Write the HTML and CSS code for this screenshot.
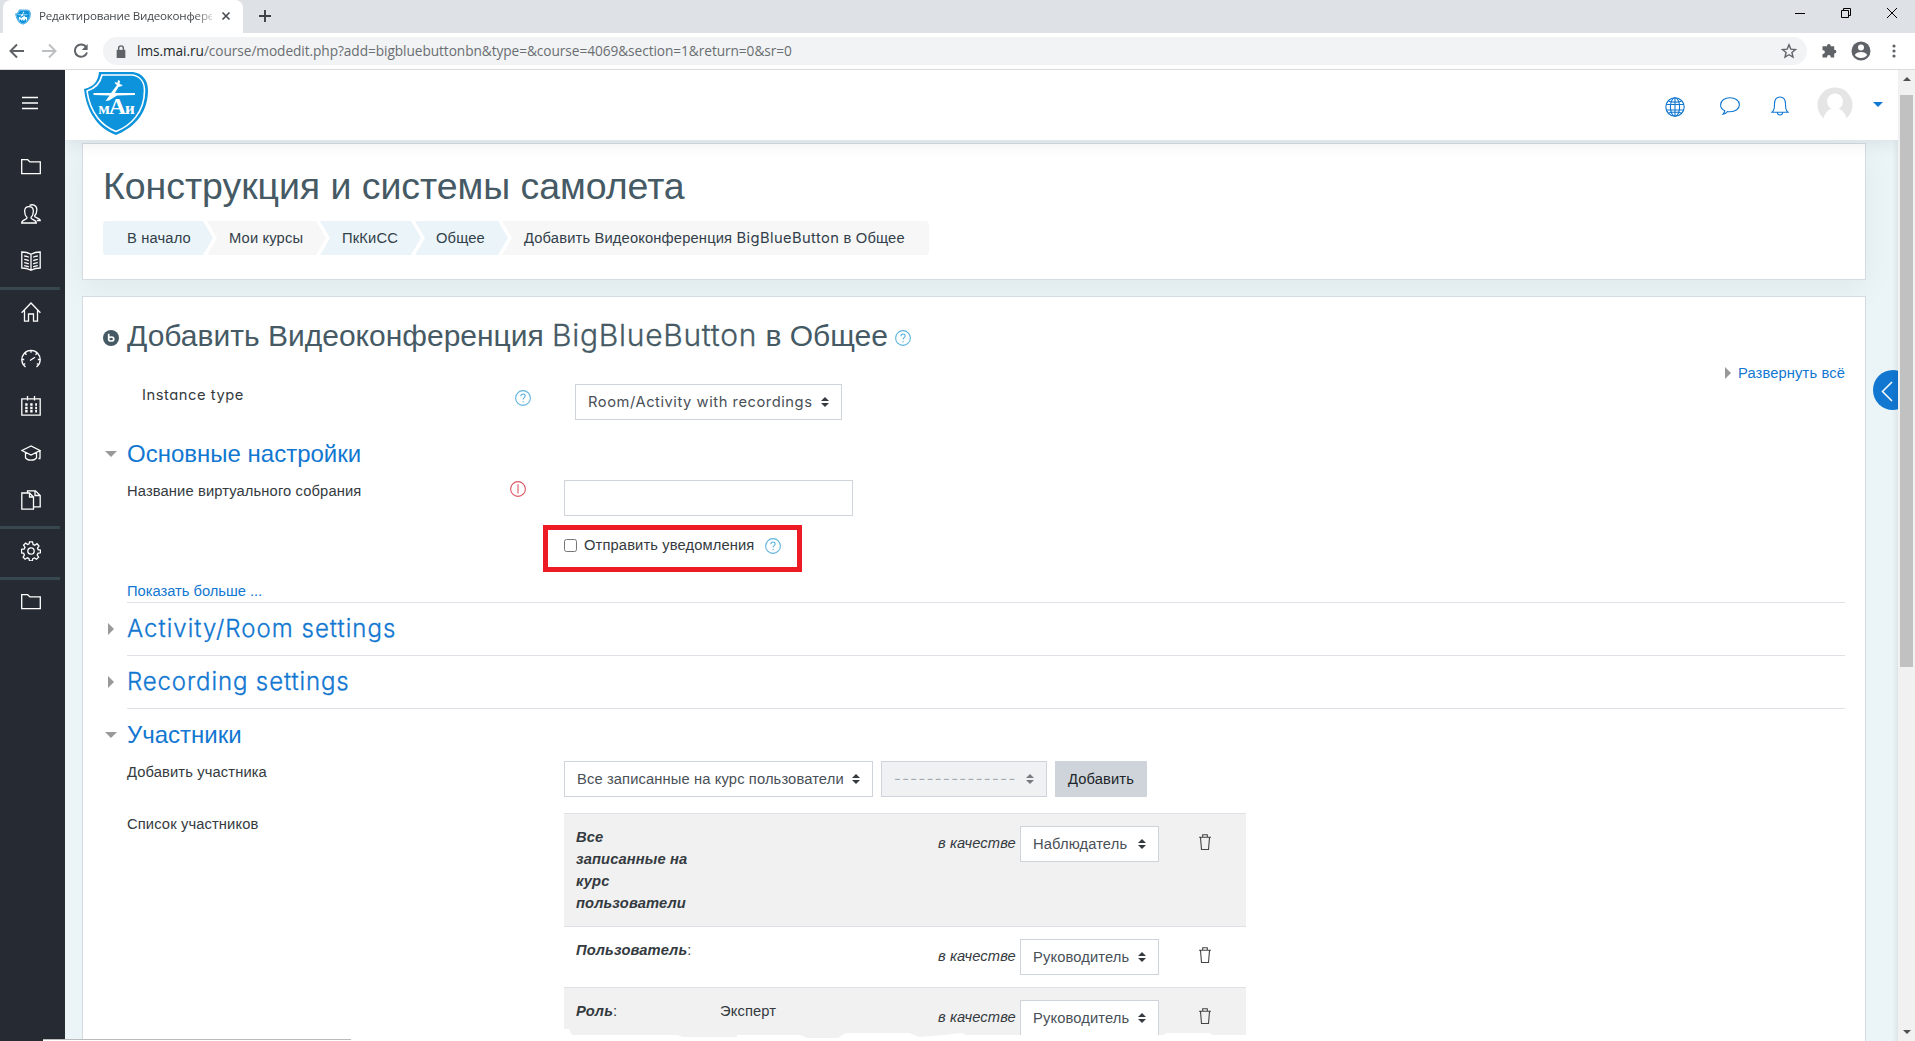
FILE: index.html
```html
<!DOCTYPE html>
<html lang="ru">
<head>
<meta charset="utf-8">
<title>Редактирование Видеоконференция</title>
<link rel="stylesheet" href="styles.css">
</head>
<body>
<svg class="defs" width="0" height="0">
  <symbol id="folder" viewBox="0 0 20 20"><path d="M.7 16.700V2.700h6l2.200 2.200h10.400v11.800z"/></symbol>
  <symbol id="help" viewBox="0 0 16 16"><circle cx="8" cy="8" r="7.400"/><path d="M5.900 6.200C5.900 3.300 10.200 3.400 10.200 6c0 1.700-2.100 1.600-2.100 3.400M8.100 11.100v1.200"/></symbol>
  <symbol id="trash" viewBox="0 0 14 18"><path d="M1 4.300h12M4.700 4V1.800h4.600V4M2.500 4.500l1 12h7l1-12"/></symbol>
  <symbol id="shield" viewBox="0 0 66 64">
    <path fill="#0d93dc" d="M16 1h34c9 1 15 8 15 18 0 26-17 39-32 45C17 58 4 44 1 18c8-2 14-6 15-17z"/>
    <path fill="none" stroke="#fff" stroke-width="1.600" d="M19 4h30c8 1 12.500 7 12.500 15.500C61.500 42 47 55 33 60.500 19 55 7 42 4 20c8-2.500 13-7 15-16z"/>
    <path fill="#fff" d="M35 9l2 1-.5 3 3 1-.5 1-3.500 1-3.500 6H52v2l-18 .5-8 5-3.500.5 4-5.500-16-.5v-2H28l6-8-2.500-2 .5-.8 2.500.6z"/>
  </symbol>
</svg>

<div class="tabstrip">
  <div class="tab">
    <svg class="favicon" viewBox="0 0 66 64"><use href="#shield"/><path fill="#fff" d="M16 46V32h5l4 6 4-6h4l5-6 4 6h8v14h-5V37l-6 9h-5l-2-5-3 5h-4v-8l-3 6-3-6v8z"/></svg>
    <span class="tab-title">Редактирование Видеоконфере</span>
    <svg class="tab-close" viewBox="0 0 10 10"><path d="M1.500 1.500l7 7m0-7l-7 7"/></svg>
  </div>
  <svg class="new-tab" viewBox="0 0 12 12"><path d="M6 0v12M0 6h12"/></svg>
  <div class="window-buttons">
    <svg viewBox="0 0 12 12"><path d="M1 6.500h10"/></svg>
    <svg viewBox="0 0 12 12"><path d="M1.500 3.500h7v7h-7zM3.500 3V1.500h7v7H9"/></svg>
    <svg viewBox="0 0 12 12"><path d="M1 1l10 10m0-10L1 11"/></svg>
  </div>
</div>

<div class="toolbar">
  <svg class="nav-icon" viewBox="0 0 16 16"><path d="M15 8H2M8 1.500L1.500 8 8 14.500"/></svg>
  <svg class="nav-icon off" viewBox="0 0 16 16"><path d="M1 8h13M8 1.500L14.500 8 8 14.500"/></svg>
  <svg class="nav-icon" viewBox="0 0 16 16"><path d="M13.400 4.400A6.200 6.200 0 1 0 14 9.500"/><path class="solid" d="M14.600 1v6H8.800z"/></svg>
  <div class="omnibox">
    <svg class="lock" viewBox="0 0 9 12"><path class="solid" d="M.5 4.500h8V12h-8z"/><path d="M2.300 5V3a2.200 2.200 0 0 1 4.400 0v2"/></svg>
    <span class="url"><b>lms.mai.ru</b>/course/modedit.php?add=bigbluebuttonbn&amp;type=&amp;course=4069&amp;section=1&amp;return=0&amp;sr=0</span>
    <svg class="star" viewBox="0 0 16 16"><path d="M8 1.800l1.800 4.300 4.700.4-3.600 3 1.100 4.600L8 11.700l-4 2.400 1.100-4.600-3.600-3 4.700-.4z"/></svg>
  </div>
  <svg class="puzzle" viewBox="0 0 16 16"><path d="M6 3a1.900 1.900 0 0 1 3.800 0v.2h3.400v3.500h.3a1.900 1.900 0 0 1 0 3.800h-.3v4H9.700v-.6a1.800 1.800 0 0 0-3.600 0v.6H1.500v-3.600h.6a1.800 1.800 0 0 0 0-3.600h-.6V3.200H6z"/></svg>
  <svg class="profile" viewBox="0 0 20 20"><circle cx="10" cy="10" r="9.500" fill="#5f6368"/><circle cx="10" cy="6.500" r="3" fill="#fff"/><path fill="#fff" d="M3.800 14c1.500-4 11-4 12.400 0-2.500 4-9.800 4-12.400 0z"/></svg>
  <svg class="dots" viewBox="0 0 4 14"><circle cx="2" cy="2" r="1.600"/><circle cx="2" cy="7" r="1.600"/><circle cx="2" cy="12" r="1.600"/></svg>
</div>

<div class="viewport">
  <nav class="sidebar">
    <a class="burger"><svg viewBox="0 0 16 14"><path d="M0 1.500h16M0 7h16M0 12.500h16"/></svg></a>
    <a><svg><use href="#folder"/></svg></a>
    <a><svg viewBox="0 0 20 20"><path d="M.7 19c0-4 6-2.800 5.300-5.500C3.500 11 3.500 9 3.700 6.500 4 3.600 6 2.700 8 2.700s4 .9 4.300 3.800c.2 2.500.2 4.500-2.300 7-.7 2.700 5.300 1.500 5.300 5.500zM8.500 1.500c2.500-1.500 7-.7 7.300 3.500.2 2.500.2 4.500-2.300 7-.3 2.200 5.500 1.500 5.700 4.500h-3.400"/></svg></a>
    <a><svg viewBox="0 0 20 20"><path d="M10 3.200C7 1.500 4 1 .8 1v16c3.200 0 6.200.7 9.200 2.300 3-1.600 6-2.300 9.200-2.300V1C16 1 13 1.500 10 3.200v16M3.200 5c1.700.1 3.200.5 4.600 1.300M3.200 8.300c1.700.1 3.200.5 4.600 1.300M3.200 11.600c1.700.1 3.200.5 4.600 1.300M3.200 14.600c1.700.1 3.200.5 4.600 1.300M16.800 5c-1.700.1-3.200.5-4.600 1.300M16.800 8.300c-1.700.1-3.200.5-4.600 1.300M16.800 11.600c-1.700.1-3.200.5-4.600 1.300M16.800 14.600c-1.700.1-3.200.5-4.600 1.300"/></svg></a>
    <hr>
    <a><svg viewBox="0 0 20 20"><path d="M.6 10.800L10 1l9.400 9.800M3.500 8.500v10.700h4V12h5v7.200h4V8.500"/></svg></a>
    <a><svg viewBox="0 0 20 20"><path d="M4.500 18A9.200 9.200 0 1 1 15.500 18M9 11.500l5-3.200M10 1.500v2.200M4 4.200l1.500 1.500M16 4.200l-1.500 1.500M1 10.500h2.200M16.800 10.500H19M2.600 15.500l1.600-.8M17.400 15.500l-1.600-.8"/></svg></a>
    <a><svg viewBox="0 0 20 20"><path d="M.8 2.800h18.400v16.400H.8zM6.500 0v4.500M13.500 0v4.500"/><path stroke-width="2.400" stroke-dasharray="2.400 2.600" d="M4.200 8.500h11.800M4.200 12h11.800M4.200 15.200h11.800"/></svg></a>
    <a><svg viewBox="0 0 20 20"><path d="M10 3L1 7.500 10 12l9-4.500zM4.500 9.500v5.300c2 3 9 3 11 0V9.500M19 7.500V15M17.500 15.500h2"/></svg></a>
    <a><svg viewBox="0 0 20 20"><path d="M.8 3h7.700l4 4v12.200H.8zM8.500 3v4h4M6.500 2.800v-2h8l4.700 4.700v11.300h-6.500M14 1v4.500h5"/></svg></a>
    <hr>
    <a><svg viewBox="0 0 20 20"><circle cx="10" cy="10" r="3.200"/><path d="M8.500.8h3l.6 2.700 1.600.7L16 2.700 18 5l-1.500 2 .6 1.600 2.300.5v2.700l-2.500.6-.7 1.600 1.400 2.200-2.100 2-2-1.300-1.700.7-.5 2.400H8.500l-.6-2.500-1.600-.7-2.200 1.400-2-2.100 1.300-2-.7-1.700-2.200-.5V8.400L3.300 8 4 6.300 2.600 4l2-1.900 2.100 1.400 1.400-.6z"/></svg></a>
    <hr>
    <a><svg><use href="#folder"/></svg></a>
  </nav>

  <main class="page">
    <header class="topbar">
      <div class="logo">
        <svg><use href="#shield"/></svg>
        <span class="logo-text">м<i>А</i>и</span>
      </div>
      <svg class="globe" viewBox="0 0 20 20"><circle cx="10" cy="10" r="9.200"/><ellipse cx="10" cy="10" rx="4.600" ry="9.200"/><path d="M10 .8v18.400M1 7.500h18M1 13h18M3.500 4.200c4 1.200 9 1.200 13 0M3.500 16c4-1.200 9-1.200 13 0"/></svg>
      <svg class="chat" viewBox="0 0 20 18"><path d="M4.800 13.700C2 12.500.6 10.500.6 8 .6 3.800 4.500.7 10 .7s9.400 3 9.400 7-3.900 7-9.400 7c-1 0-1.700 0-2.500-.2-1 1.400-2.300 2.300-4.500 2.800 1-1.200 1.600-2.200 1.800-3.600z"/></svg>
      <svg class="bell" viewBox="0 0 18 20"><path d="M1 16.200c2.800-2 2.300-5 2.500-8.500C3.700 3.300 6 1 9 1s5.300 2.300 5.500 6.700c.2 3.500-.3 6.500 2.500 8.500zM6.300 16.500c.3 3.400 5.100 3.400 5.400 0"/></svg>
      <svg class="avatar" viewBox="0 0 36 36"><circle cx="18" cy="18" r="17.500" fill="#e5e5e5"/><circle cx="18" cy="14.500" r="8" fill="#fff"/><path fill="#fff" d="M6 36c0-9 5-13.500 9-14.500h6c4 1 9 5.500 9 14.500z"/></svg>
      <span class="caret"></span>
    </header>

    <section class="card course">
      <h1>Конструкция и системы самолета</h1>
      <ol class="crumbs">
        <li class="c1">В начало</li>
        <li class="c2">Мои курсы</li>
        <li class="c3">ПкКиСС</li>
        <li class="c4">Общее</li>
        <li class="c5">Добавить Видеоконференция <span class="lat">BigBlueButton</span> в Общее</li>
      </ol>
    </section>

    <section class="card form">
      <h2>
        <svg class="bbb" viewBox="0 0 16 16"><circle cx="8" cy="8" r="8" fill="#455a64"/><path d="M5.700 3.800v5.700c0 2 5 2 5 0v-1c0-1.800-3-1.800-4.700-.9" fill="none" stroke="#fff" stroke-width="1.700"/></svg>
        <span>Добавить Видеоконференция <span class="lat">BigBlueButton</span> в Общее</span>
        <svg class="help"><use href="#help"/></svg>
      </h2>
      <div class="expand"><i class="tri-right"></i><span>Развернуть всё</span></div>

      <div class="row instance">
        <div class="label"><span class="lat">Instance type</span><svg class="help"><use href="#help"/></svg></div>
        <div class="select w-type"><span class="lat">Room/Activity with recordings</span><i class="updown"></i></div>
      </div>

      <h3 class="first"><i class="tri-down"></i><span>Основные настройки</span></h3>
      <div class="row name">
        <div class="label"><span>Название виртуального собрания</span>
          <svg class="required" viewBox="0 0 16 16"><circle cx="8" cy="8" r="7.400"/><path d="M8 3.200v9.300"/></svg></div>
        <div class="input"></div>
      </div>
      <div class="row notify">
        <span class="checkbox"></span><span>Отправить уведомления</span><svg class="help"><use href="#help"/></svg>
        <div class="highlight"></div>
      </div>
      <div class="more">Показать больше ...</div>

      <h3 class="ruled activity"><i class="tri-right"></i><span class="lat">Activity/Room settings</span></h3>
      <h3 class="ruled"><i class="tri-right"></i><span class="lat">Recording settings</span></h3>
      <h3 class="ruled"><i class="tri-down"></i><span>Участники</span></h3>

      <div class="row add">
        <div class="label">Добавить участника</div>
        <div class="select w-users"><span>Все записанные на курс пользователи</span><i class="updown"></i></div>
        <div class="select w-none"><span class="lat dashes">---------------</span><i class="updown"></i></div>
        <div class="button">Добавить</div>
      </div>
      <div class="row list">
        <div class="label">Список участников</div>
        <div class="table">
          <div class="tr all"><div class="who"><b>Все записанные на курс пользователи</b></div><div class="what"></div><em>в качестве</em><div class="select w-role"><span>Наблюдатель</span><i class="updown"></i></div><svg class="trash"><use href="#trash"/></svg></div>
          <div class="tr user"><div class="who"><b>Пользователь</b>:</div><div class="what"></div><em>в качестве</em><div class="select w-role"><span>Руководитель</span><i class="updown"></i></div><svg class="trash"><use href="#trash"/></svg></div>
          <div class="tr role"><div class="who"><b>Роль</b>:</div><div class="what">Эксперт</div><em>в качестве</em><div class="select w-role"><span>Руководитель</span><i class="updown"></i></div><svg class="trash"><use href="#trash"/></svg></div>
        </div>
      </div>
    </section>
    <div class="drawer"><svg viewBox="0 0 12 20"><path d="M11 1L1.500 10.500 11 20"/></svg></div>
  </main>
  <div class="scrollbar"><i class="up"></i><div class="thumb"></div><i class="down"></i></div>
  <div class="status"></div>
</div>
</body>
</html>
```
FILE: styles.css
```css
* { box-sizing: border-box; }
html, body { margin: 0; height: 100%; overflow: hidden; }
body {
  display: flex; flex-direction: column;
  font: 14.72px/22px "Liberation Sans", Arial, sans-serif;
  letter-spacing: .12px;
  color: #343a40; background: #fff;
}
.defs { position: absolute; }
svg { flex: none; display: block; }
h1, h2, h3, ol { margin: 0; padding: 0; font-weight: 400; letter-spacing: 0; }
.lat { font-family: Inter, sans-serif; font-weight: 400; font-feature-settings: "cv11"; letter-spacing: .54px; }
h2 .lat, h3 .lat { font-weight: 300; -webkit-text-stroke: .3px currentColor; }
h3 .lat { letter-spacing: .88px; }
h3.activity .lat { letter-spacing: 1.020px; }
h2 .lat { letter-spacing: .72px; }
.crumbs .lat { letter-spacing: .4px; }

/* browser chrome */
.tabstrip { height: 33px; flex: none; display: flex; align-items: center; background: #dee1e6; padding-left: 3px; }
.tab { width: 240px; height: 33px; background: #fff; border-radius: 8px 8px 0 0; display: flex; align-items: center; padding: 0 12px; }
.favicon { width: 16px; height: 16px; }
.tab-title { font: 11.600px/16px "Open Sans", sans-serif; letter-spacing: -.2px; color: #45494d; width: 176px; margin: -2px 0 0 8px; overflow: hidden; white-space: nowrap; -webkit-mask-image: linear-gradient(90deg, #000 155px, transparent 180px); mask-image: linear-gradient(90deg, #000 155px, transparent 180px); }
.tab-close { width: 10px; height: 10px; margin: -2px 0 0 9px; stroke: #45494d; stroke-width: 1.600; }
.new-tab { width: 12px; height: 12px; margin: -1px 0 0 16px; stroke: #3c4043; stroke-width: 1.900; }
.window-buttons { margin-left: auto; display: flex; gap: 34px; padding-right: 17px; height: 27px; margin-top: -7px; align-items: center; }
.window-buttons svg { width: 12px; height: 12px; fill: none; stroke: #000; stroke-width: 1; }
.toolbar { height: 37px; flex: none; display: flex; align-items: center; padding-left: 9px; border-bottom: 1px solid #d9dbdd; }
.nav-icon { width: 16px; height: 16px; margin-right: 16px; fill: none; stroke: #5f6368; stroke-width: 2; }
.nav-icon.off { stroke: #bdc0c3; }
.solid { fill: #5f6368; stroke: none; }
.omnibox { width: 1704px; height: 28px; margin-left: -2px; border-radius: 14px; background: #f1f3f4; display: flex; align-items: center; padding: 0 10px 0 13px; }
.lock { width: 10px; height: 13px; fill: none; stroke: #5f6368; stroke-width: 1.300; }
.url { font: 13.700px/20px "Open Sans", sans-serif; letter-spacing: -.07px; color: #6a6e72; margin-left: 11px; }
.url b { font-weight: 400; color: #25282b; }
.star { width: 16px; height: 16px; margin-left: auto; fill: none; stroke: #5f6368; stroke-width: 1.400; }
.puzzle { width: 16px; height: 16px; margin-left: 14px; fill: #5f6368; }
.profile { width: 20px; height: 20px; margin-left: 14px; }
.dots { width: 4px; height: 14px; margin-left: 21px; fill: #5f6368; }

/* page frame */
.viewport { flex: 1; min-height: 0; display: flex; position: relative; }
.sidebar { width: 65px; flex: none; background: #262b33; display: flex; flex-direction: column; overflow: hidden; }
.sidebar a { height: 47px; flex: none; display: flex; align-items: center; padding-left: 21px; }
.sidebar svg { width: 20px; height: 20px; fill: none; stroke: #fff; stroke-width: 1.300; }
.sidebar .burger { height: 73px; padding: 0 0 7px 22px; }
.sidebar .burger svg { width: 16px; height: 14px; }
.sidebar hr { width: 60px; height: 3px; flex: none; border: 0; margin: 3px 0 -2px; background: #37474f; }
.page { flex: 1; min-width: 0; background: #ebf4f7; position: relative; overflow: hidden; }
.topbar { height: 70px; background: #fff; display: flex; align-items: center; padding-left: 18px; position: relative; box-shadow: 0 5px 15px rgba(0,0,0,.07); }
.logo { width: 66px; height: 64px; margin-top: -4px; position: relative; }
.logo svg { width: 66px; height: 64px; }
.logo-text { position: absolute; left: 0; right: 0; top: 21px; text-align: center; font: bold 17px/28px "Liberation Serif", serif; color: #fff; letter-spacing: -1px; }
.logo-text i { font-style: normal; font-size: 24px; }
.topbar > svg { fill: none; stroke: #1177d1; stroke-width: 1.100; }
.globe { width: 20px; height: 20px; margin: 3px 0 0 1516px; }
.chat { width: 20px; height: 18px; margin: 2px 0 0 35px; }
.bell { width: 18px; height: 20px; margin: 1px 0 0 31px; }
.topbar > .avatar { width: 36px; height: 36px; margin-left: 28px; stroke: none; }
.caret { margin: -2px 0 0 20px; border: 5px solid transparent; border-top-color: #1177d1; border-bottom: 0; }

.card { width: 1784px; margin-left: 17px; background: #fff; border: 1px solid #d3dce1; padding: 0 20px; }
.course { margin-top: 3px; height: 137px; padding-top: 21px; box-shadow: 0 10px 30px rgba(0,0,0,.05); }
h1 { font-size: 37.500px; line-height: 42px; color: #455a64; margin-bottom: 14px; letter-spacing: -.05px; }
.crumbs { display: flex; list-style: none; height: 34px; line-height: 34px; color: #32404a; letter-spacing: .15px; }
.crumbs li { background: #ebf4f8; white-space: nowrap; margin-right: -6px; clip-path: polygon(0 0, calc(100% - 10px) 0, 100% 50%, calc(100% - 10px) 100%, 0 100%, 10px 50%); }
.crumbs .c1 { width: 110px; padding-left: 24px; border-radius: 4px 0 0 4px; clip-path: polygon(0 0, calc(100% - 10px) 0, 100% 50%, calc(100% - 10px) 100%, 0 100%); }
.crumbs .c2 { width: 119px; padding-left: 22px; background: #f7f7f7; }
.crumbs .c3 { width: 101px; padding-left: 22px; }
.crumbs .c4 { width: 93px; padding-left: 21px; }
.crumbs .c5 { width: 427px; padding-left: 22px; background: #f7f7f7; border-radius: 0 4px 4px 0; clip-path: polygon(0 0, 100% 0, 100% 100%, 0 100%, 10px 50%); }

/* form */
.form { margin-top: 16px; height: 800px; }
h2 { height: 65px; padding-top: 18px; display: flex; align-items: center; padding-bottom: 7px; font-size: 30px; color: #455a64; white-space: nowrap; }
.bbb { width: 16px; height: 16px; margin: 5px 8px 0 0; }
.help { width: 16px; height: 16px; fill: none; stroke: #5bb3dc; stroke-width: 1.100; }
h2 .help { margin: 5px 0 0 7px; }
.expand { height: 22px; display: flex; align-items: center; justify-content: flex-end; gap: 7px; color: #1177d1; }
.tri-right { border: 6px solid transparent; border-left-color: #999; border-right: 0; }
.tri-down { border: 6px solid transparent; border-top-color: #999; border-bottom: 0; }
.row { display: flex; padding-left: 24px; position: relative; }
.label { width: 437px; flex: none; display: flex; }
.instance { padding-left: 39px; }
.instance .label { width: 433px; }
.instance .label .help { margin: 6px 44px 0 auto; }
.select { height: 36px; flex: none; border: 1px solid #cfd4db; background: #fff; display: flex; align-items: center; justify-content: space-between; padding: 0 12px; color: #495057; white-space: nowrap; }
.w-type { width: 267px; }
.w-users { width: 309px; }
.w-none { width: 166px; margin-left: 8px; background: #f0f1f3; color: #a5abb2; }
.w-none .dashes { letter-spacing: 1.400px; }
.w-role { width: 139px; }
.updown { width: 8px; height: 10px; flex: none; background: #343a40; clip-path: polygon(50% 0, 100% 40%, 0 40%, 0 60%, 100% 60%, 50% 100%, 0 60%, 0 40%); }
.w-none .updown { background: #777b80; }
h3 { font-size: 24px; line-height: 30px; color: #1177d1; display: flex; align-items: center; }
h3 i { flex: none; }
h3 .tri-down { margin: 0 10px 0 2px; }
h3 .tri-right { margin: 0 13px 0 5px; }
h3.first { margin: 19px 0 11px; }
h3.ruled { height: 53px; position: relative; }
h3.ruled::before { content: ""; position: absolute; left: 24px; right: 0; top: 0; border-top: 1px solid #dee2e6; }
.required { width: 16px; height: 16px; fill: none; stroke: #dc5560; stroke-width: 1.100; margin: 1px 38px 0 auto; }
.input { width: 289px; height: 36px; border: 1px solid #cfd4db; }
.notify { height: 22px; margin-top: 18px; padding-left: 461px; align-items: center; }
.checkbox { width: 13px; height: 13px; border: 1px solid #767676; border-radius: 2.500px; margin-right: 7px; }
.notify .help { margin: 1px 0 0 11px; }
.highlight { position: absolute; left: 440px; top: -9px; width: 259px; height: 47px; border: 5px solid #ed1c24; }
.more { margin: 24px 0 0 24px; height: 22px; color: #1177d1; letter-spacing: -.02px; }
.button { width: 92px; height: 36px; line-height: 36px; margin-left: 8px; text-align: center; background: #ced4da; color: #212529; }
.list { margin-top: 16px; }
.table { width: 682px; clip-path: polygon(0 0, 100% 0, 100% 222px, 648px 222px, 646px 220px, 602px 220px, 600px 222px, 402px 222px, 398px 220px, 380px 222px, 355px 224px, 345px 220px, 282px 220px, 274px 225px, 243px 225px, 236px 222px, 173px 222px, 173px 224px, 118px 224px, 114px 222px, 8px 222px, 5px 216px, 0 216px); }
.tr { display: flex; border-top: 1px solid #dee2e6; padding: 12px 0 0 12px; }
.all { height: 113px; background: #f1f1f1; }
.user { height: 61px; }
.role { height: 61px; background: #f1f1f1; }
.who { width: 144px; padding-right: 28px; white-space: nowrap; }
.all .who { white-space: normal; }
.who b { font-style: italic; }
.what { width: 218px; }
.tr em { width: 82px; padding-top: 6px; white-space: nowrap; }
.trash { width: 14px; height: 18px; margin: 7px 0 0 39px; fill: none; stroke: #444; stroke-width: 1.100; }

/* side drawer handle and scrollbar */
.drawer { position: absolute; right: -15px; top: 300px; width: 40px; height: 40px; border-radius: 50%; background: #1177d1; padding: 11px 0 0 8px; }
.drawer svg { width: 12px; height: 20px; fill: none; stroke: #fff; stroke-width: 1.500; overflow: visible; }
.page::after { content: ""; position: absolute; right: 0; top: 70px; bottom: 0; width: 6px; background: linear-gradient(90deg, transparent, rgba(0,0,0,.06)); }
.scrollbar { width: 17px; flex: none; background: #f1f1f1; display: flex; flex-direction: column; align-items: center; padding: 7px 0; }
.thumb { width: 13px; height: 572px; margin-top: 14px; background: #c1c1c1; }
.up { border: 4px solid transparent; border-bottom-color: #505050; border-top: 0; }
.down { border: 4px solid transparent; border-top-color: #505050; border-bottom: 0; margin-top: auto; }
.status { position: absolute; left: 43px; bottom: 0; width: 308px; height: 2px; background: #fff; border-top: 1px solid #bbb; }
```
